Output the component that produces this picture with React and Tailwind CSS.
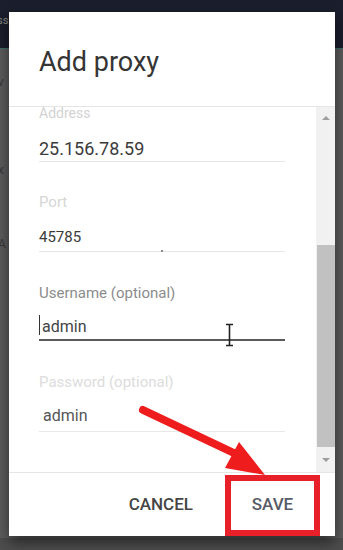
import React from "react";

const font = { fontFamily: "Roboto, 'Noto Sans', Arial, sans-serif" };

export default function App() {
  return (
    <div
      className="relative w-[343px] h-[550px] overflow-hidden bg-[#5d5d5d] flex flex-col"
      style={font}
    >
      {/* background page */}
      <div className="h-[48px] bg-[#1b1e2c] flex items-center text-[11px] text-[#8a8a8a]">
        <span className="-ml-[3px] -mt-[5px]">ss</span>
      </div>
      <div className="h-[1px] bg-[#3f6f6a]" />
      <div className="flex-1 flex flex-col text-[12px] text-[#3a3a3a] pl-[0px]">
        <span className="mt-[24px] -ml-[2px]">v</span>
        <span className="mt-[70px] -ml-[2px]">x</span>
        <span className="mt-[56px] -ml-[2px]">A</span>
      </div>
      <div className="h-[12px] bg-[#4e4e4e]" />

      {/* modal dialog */}
      <div className="absolute left-[9px] top-[12px] w-[326px] h-[524px] bg-white flex flex-col shadow-[0_6px_14px_rgba(0,0,0,0.55)]">
        {/* header */}
        <div className="h-[95px] border-b border-[#e6e6e6] pl-[30px] pt-[37px]">
          <div className="text-[27px] leading-none text-[#353535]">Add proxy</div>
        </div>

        {/* body */}
        <div className="h-[365px] flex">
          <div className="flex-1 overflow-hidden pl-[30px] flex flex-col">
            <div className="-mt-[1px] text-[14px] leading-none text-[#d2d2d2] h-[14px]">Address</div>
            <div className="mt-[20px] text-[18px] leading-none text-[#3c3c3c] h-[18px]">25.156.78.59</div>
            <div className="mt-[3px] w-[246px] h-[1px] bg-[#e6e6e6]" />

            <div className="mt-[33px] text-[15px] leading-none text-[#d6d6d6] h-[15px]">Port</div>
            <div className="mt-[20px] text-[15px] leading-none text-[#3a3a3a] h-[15px]">45785</div>
            <div className="mt-[6px] w-[246px] h-[1px] bg-[#e6e6e6] flex">
              <div className="ml-[122px] -mt-[1px] w-[2px] h-[2px] bg-[#8a8a8a]" />
            </div>

            <div className="mt-[34px] text-[15px] leading-none text-[#8c8c8c] h-[15px]">Username (optional)</div>
            <div className="relative mt-[18px] h-[16px] flex items-start">
              <div className="w-[1px] h-[20px] -mt-[4px] bg-[#333]" />
              <div className="ml-[2px] text-[16px] leading-none text-[#444]">admin</div>
            </div>
            <div className="mt-[4px] w-[246px] h-[2px] bg-[#5a5a5a]" />

            <div className="mt-[34px] text-[15px] leading-none text-[#dcdcdc] h-[15px]">Password (optional)</div>
            <div className="mt-[18px] pl-[4px] text-[16px] leading-none text-[#555] h-[16px]">admin</div>
            <div className="mt-[7px] w-[246px] h-[1px] bg-[#e8e8e8]" />
          </div>

          {/* scrollbar */}
          <div className="w-[19px] bg-[#f1f1f1] flex flex-col items-center">
            <div className="mt-[9px] w-0 h-0 border-x-[4px] border-x-transparent border-b-[4px] border-b-[#9e9e9e]" />
            <div className="mt-[125px] w-[18px] h-[202px] bg-[#c1c1c1]" />
            <div className="mt-[11px] w-0 h-0 border-x-[4px] border-x-transparent border-t-[4px] border-t-[#9e9e9e]" />
          </div>
        </div>

        {/* footer */}
        <div className="flex-1 border-t border-[#e6e6e6] flex items-center justify-end">
          <div className="text-[17px] leading-none font-medium text-[#454545]">CANCEL</div>
          <div className="ml-[32px] mr-[15px] mt-[2px] w-[95px] h-[61px] border-[6px] border-[#e8202a] flex items-center justify-center">
            <span className="text-[17px] leading-none font-medium text-[#565b66] -mt-[2px]">SAVE</span>
          </div>
        </div>
      </div>

      {/* text cursor (I-beam) */}
      <svg className="absolute left-[224px] top-[323px]" width="11" height="24" viewBox="0 0 11 24">
        <path d="M2 1.5 H9 M5.5 1.5 V22.5 M2 22.5 H9" stroke="#222" strokeWidth="1.6" fill="none" />
      </svg>

      {/* red arrow annotation */}
      <svg className="absolute left-0 top-0 pointer-events-none" width="343" height="550" viewBox="0 0 343 550">
        <line x1="143" y1="410" x2="236" y2="454" stroke="#ee1c1c" strokeWidth="8" strokeLinecap="round" />
        <polygon points="225,468 239,442 265,475" fill="#ee1c1c" />
      </svg>
    </div>
  );
}
